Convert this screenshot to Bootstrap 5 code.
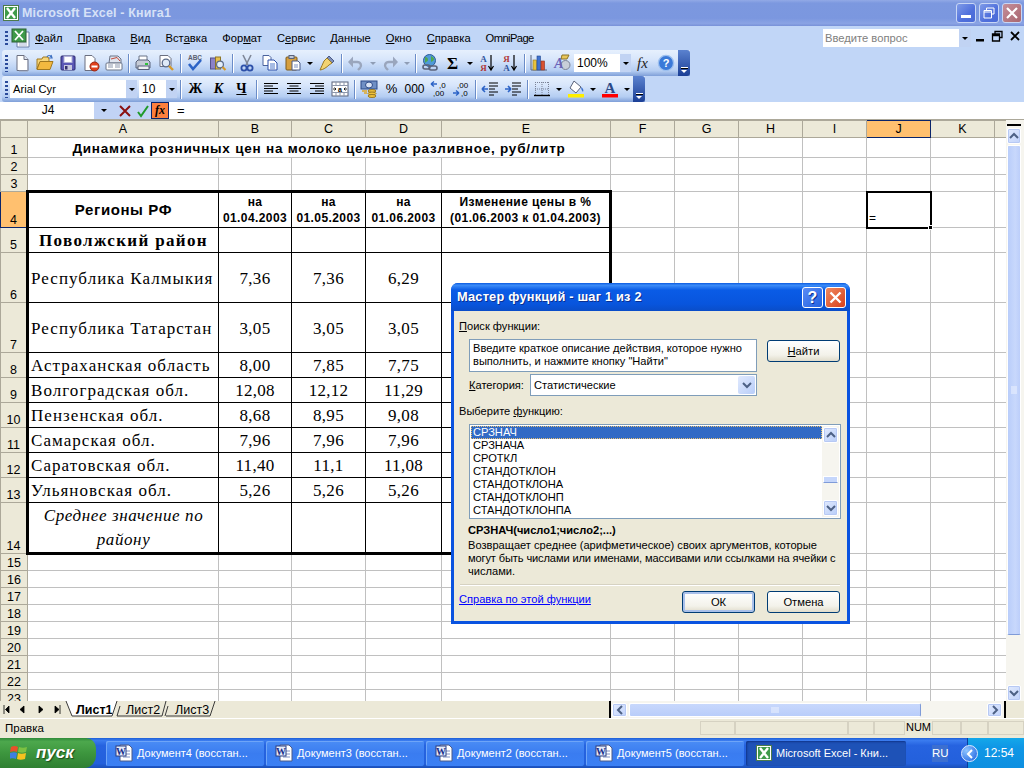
<!DOCTYPE html>
<html>
<head>
<meta charset="UTF-8">
<title>Microsoft Excel - Книга1</title>
<link rel="stylesheet" href="https://cdn.jsdelivr.net/npm/bootstrap@5.3.0/dist/css/bootstrap.min.css">
<style>
body { margin:0; width:1024px; height:768px; overflow:hidden; background:#ece9d8; font-family:"Liberation Sans",Arial,sans-serif; font-size:11.2px; color:#000; }
.app { width:1024px; height:768px; }
u { text-decoration-thickness:1px; text-underline-offset:1px; }
svg { display:block; }

/* title */
.titlebar { height:26px; background:linear-gradient(#92a9e6 0,#7c98df 12%,#7b97df 70%,#8aa3e4 90%,#7891d8 100%); padding:0 2px 0 3px; }
.titlebar .cap { color:#d6e1f7; font-weight:bold; font-size:12.5px; letter-spacing:.15px; margin-left:3px; }
.wbtn { width:20px; height:20px; border:1px solid #c8d6f5; border-radius:3px; background:linear-gradient(135deg,#7f9be8,#4f6fdc 60%,#4a6ad6); margin-left:3px; }
.wbtn.close { background:linear-gradient(135deg,#c58f9a,#a9666f); }

/* menu + toolbars */
.barzone { height:76px; background:#c1d6f7; }
.menu { height:24px; padding-left:35px; gap:15px; font-size:11.2px; }
.omni { letter-spacing:-.6px; }
.grip { width:3px; height:17px; margin:0 3px 0 4px; background:repeating-linear-gradient(#2b4b9b 0,#2b4b9b 2px,transparent 2px,transparent 4px); }
.toolbar { height:26px; background:linear-gradient(#e6f0fd 0,#d8e6fb 35%,#b4cdf2 80%,#7f9fd8 100%); border-radius:3px 0 0 3px; margin-left:2px; width:max-content; }
.tb1 { width:688px; }
.tb2 { width:643px; }
.ib { width:23px; height:22px; flex:none; }
.arr { width:11px; height:22px; flex:none; }
.arr::after { content:""; border:3px solid transparent; border-top:3px solid #000; border-bottom:0; border-left-width:3.5px; border-right-width:3.5px; }
.arr.off::after { border-top-color:#8f9db5; }
.sep { width:6px; height:19px; flex:none; position:relative; }
.sep::after { content:""; position:absolute; left:3px; top:0; bottom:0; width:1px; background:#6a8cc8; box-shadow:1px 0 0 #fff; }
.chev { width:12px; height:26px; margin-left:auto; background:linear-gradient(#5b82cf,#1b3f96); border-radius:0 3px 3px 0; padding-bottom:3px; }
.chev i { display:block; width:7px; height:1px; background:#fff; box-shadow:0 1px 0 #000; margin-top:auto; }
.chev b { display:block; border:3px solid transparent; border-top:3px solid #fff; border-bottom:0; margin-top:2px; }
.glyph { font-size:14px; font-family:"Liberation Serif",serif; font-weight:bold; line-height:1; }
.combo { background:#fff; height:18px; flex:none; padding-left:3px; font-size:12px; }
.combo .dd { width:11px; height:100%; margin-left:auto; background:#c1d3f3; }
.combo .dd::after { content:""; border:3px solid transparent; border-top:3px solid #000; border-bottom:0; border-left-width:3.5px; border-right-width:3.5px; }
.ask { position:absolute; left:823px; top:3px; width:148px; height:18px; color:#808080; padding-left:2px; font-size:11.2px; }
.mdi { position:absolute; top:4px; }

/* formula bar */
.fbar { height:18px; background:#fff; border-bottom:1px solid #aca899; }
.fbar .blue { width:57px; background:#c1d3f5; height:17px; }
.namebox { width:92px; margin-left:2px; text-align:center; font-size:12px; line-height:17px; }
.fx { width:18px; height:17px; background:#fd7f3d; border:1px solid #0a246a; font-family:"Liberation Serif",serif; font-style:italic; font-weight:bold; font-size:12px; line-height:15px; text-align:center; }

/* sheet */
.sheetwrap { height:581px; overflow:hidden; position:relative; }
.gridclip { width:1006px; height:581px; overflow:hidden; position:relative; background:#fff; }
table.sheet { table-layout:fixed; width:1006px; border-collapse:collapse; background:#fff; }
.sheet td,.sheet th { border:1px solid #c0c0c0; padding:0; text-align:center; overflow:visible; white-space:nowrap; font-weight:normal; vertical-align:middle; line-height:1.1; }
.sheet .hd { background:#ece9d8; border-color:#aca899; font-size:12.5px; line-height:1; }
.sheet tr.hrow th { height:17px; }
.sheet th.rn { vertical-align:bottom; padding-bottom:1px; }
.sheet .act { background:#ffc06f; border-color:#0a246a; }
.r17 td,.r17 th { height:17px; } .r20 td,.r20 th { height:20px; } .r36 td,.r36 th { height:36px; }
.r25 td,.r25 th { height:25px; } .r50 td,.r50 th { height:50px; } .r51 td,.r51 th { height:51px; }
.sheet td.b { border-color:#000; }
.sheet td.tt { border-top:3px solid #000; } .sheet td.tl { border-left:3px solid #000; } .sheet td.tr { border-right:3px solid #000; } .sheet td.tb { border-bottom:3px solid #000; }
.sheet td.ti { font-weight:bold; font-size:13.5px; letter-spacing:.77px; padding-top:3px; }
.sheet td.hdr { font-weight:bold; font-size:12px; line-height:16px; letter-spacing:.4px; }
.sheet td.reg { font-weight:bold; font-size:15px; letter-spacing:.6px; }
.sheet td.tm { font-family:"Liberation Serif",serif; font-size:17px; letter-spacing:.3px; padding-top:3px; }
.sheet td.tm.l { text-align:left; padding-left:2px; letter-spacing:1.05px; }
.sheet td.tm.pov { font-weight:bold; letter-spacing:1.35px; }
.sheet td.tm.avg { font-style:italic; line-height:24px; white-space:normal; letter-spacing:.6px; padding-top:1px; }
.cur { position:absolute; left:866px; top:71px; width:66px; height:38px; border:2px solid #000; font-size:12px; padding:0 0 0 1px; display:flex; align-items:flex-end; }
.cur::after { content:""; position:absolute; right:-3px; bottom:-3px; width:5px; height:5px; background:#000; border:1px solid #fff; }

/* scrollbars */
.vscroll { width:18px; background:#f6f5ef; position:relative; padding:8px 3px 0 1px; }
.vscroll .split { position:absolute; left:1px; right:3px; top:4px; height:2px; background:#000; }
.sbtn { background:linear-gradient(135deg,#e1eafe,#c1d3fb); border:1px solid #fff; border-radius:2px; flex:none; box-shadow:inset 0 0 0 1px #b7c9f4; }
.vthumb { background:linear-gradient(90deg,#b9cdfa,#c8d8fc 60%,#bccefa); border:1px solid #fff; border-bottom:1px solid #7f9bd8; border-radius:2px; height:490px; margin-top:1px; }
.hthumb { background:linear-gradient(#c8d8fc,#b9cdfa); border:1px solid #fff; border-right:1px solid #7f9bd8; border-radius:2px; width:292px; height:14px; margin-left:2px; }

/* tabs + status */
.tabs { height:17px; background:#ece9d8; position:relative; }
.hs { position:absolute; left:609px; top:0; width:397px; height:17px; background:#f6f5ef; border-left:2px solid #000; border-right:2px solid #000; padding-left:1px; }
.status { height:20px; border-top:1px solid #fff; padding:0 0 0 5px; font-size:11.5px; }
.status .p { height:14px; border:1px solid #d6d2c2; flex:none; font-size:11px; line-height:12px; text-align:center; }

/* taskbar */
.taskbar { height:30px; background:linear-gradient(#1d5fd6 0,#3a7bef 8%,#2663e0 25%,#2360dc 85%,#1a4fb8 100%); color:#fff; position:relative; }
.start { width:96px; height:30px; background:linear-gradient(#2f8a3a 0,#4da84d 12%,#3d963e 50%,#2f7f32 100%); border-radius:0 10px 12px 0; font-style:italic; font-weight:bold; font-size:17px; padding-left:10px; text-shadow:1px 1px 1px #1c4a1c; flex:none; }
.task { width:158px; height:25px; flex:none; background:linear-gradient(#4a8cf5,#3a7cf0 50%,#3b80f4); border-radius:2px; margin-right:2px; padding-left:9px; font-size:11px; box-shadow:inset 1px 1px 0 #6ea5f8; }
.task.on { background:#1e52b7; box-shadow:inset 1px 1px 2px #10348a; width:160px; padding-left:10px; }
.ru { position:absolute; left:932px; top:7px; width:16px; height:17px; background:#3c6fd0; text-align:center; line-height:17px; font-size:11.5px; }
.tray { position:absolute; left:967px; top:0; width:57px; height:30px; background:linear-gradient(#14a8ea,#0f97e6 30%,#0e8fe0); border-left:1px solid #0a3e9c; font-size:12px; padding-left:16px; line-height:30px; }
.chevr { position:absolute; left:-7px; top:7px; width:17px; height:17px; border-radius:50%; background:radial-gradient(circle at 30% 30%,#8fc5ff,#1a5fe0); border:1px solid #dfeaff; }

/* dialog */
.dlg { position:absolute; left:451px; top:283px; width:399px; height:341px; background:#0a53e0; border-radius:7px 7px 0 0; padding:0 3px 3px; }
.dlgtitle { height:28px; margin:0 -3px; padding:0 4px 0 6px; border-radius:7px 7px 0 0; background:linear-gradient(#0a5ae0 0,#3c8cf8 8%,#0a5ce6 25%,#0855dd 75%,#0a4dc8 100%); color:#fff; font-weight:bold; font-size:12.8px; text-shadow:1px 1px 0 #0a2f90; letter-spacing:.2px; }
.dbtn { width:21px; height:21px; border:1px solid #fff; border-radius:3px; background:linear-gradient(135deg,#5a8cf5,#2260e0); margin-left:2px; color:#fff; font-weight:bold; font-size:16px; line-height:19px; text-align:center; }
.dbtn.x { background:linear-gradient(135deg,#f08a60,#d8401c); }
.dlgbody { background:#ece9d8; height:310px; padding:9px 4px 0 5px; font-size:11.1px; position:relative; }
.lh13 { line-height:13px; }
.desc { white-space:nowrap; }
.desc span { letter-spacing:-.13px; }
.hint { margin-left:10px; width:288px; height:33px; background:#fff; border:1px solid #7f9db9; padding:2px 3px; line-height:13px; white-space:nowrap; }
.xpbtn { width:73px; height:22px; padding:0; font-size:11.2px; line-height:20px; border:1px solid #003c74; border-radius:3px; background:linear-gradient(#fff,#f3f2ea 70%,#e0dccb); color:#000; }
.xpbtn.def { box-shadow:inset 0 0 0 2px #a9c0ea; }
.catsel { width:227px; height:22px; background:#fff; border:1px solid #7f9db9; padding-left:3px; }
.catsel .dd { width:17px; height:18px; margin:1px; background:linear-gradient(135deg,#e1eafe,#b8cdf8); border-radius:2px; }
.fnlist { margin-left:10px; width:372px; height:95px; border:1px solid #7f9db9; background:#fff; padding:1px; border-radius:0; }
.fnlist .list-group-item { border:0; padding:0 0 0 2px; height:13px; line-height:13px; background:transparent; color:#000; font-size:11.1px; }
.fnlist .list-group-item.active { background:#316ac5; color:#fff; outline:1px dotted #e8c070; outline-offset:-1px; }
.fnscroll { width:17px; background:#f6f5ef; }
.fnbtn { width:15px; height:16px; margin:1px; background:linear-gradient(135deg,#e1eafe,#b8cdf8); border:1px solid #fff; border-radius:2px; box-shadow:0 0 0 1px #b7c9f4 inset; }
.fnthumb { width:15px; height:7px; margin:auto 1px 16px; background:#c5d6fb; border:1px solid #fff; border-bottom-color:#7f9bd8; }
.hr { height:1px; background:#d6d2c2; box-shadow:0 1px 0 #fff; margin:6px 3px 0 1px; }
.dlink { color:#00f; text-decoration:underline; }
</style>
</head>
<body>
<svg width="0" height="0" class="position-absolute">
  <symbol id="xl" viewBox="0 0 16 16"><rect x=".5" y=".5" width="15" height="15" fill="#fff" stroke="#4c7a4c"/><rect x="2" y="2" width="12" height="12" fill="#3f9a4a"/><path d="M4 3l8 10M12 3L4 13" stroke="#fff" stroke-width="2.4"/></symbol>
  <symbol id="word" viewBox="0 0 18 18"><path d="M5 1h9l3 3v13H5z" fill="#fff" stroke="#4a5a88"/><path d="M8 7h7M8 10h7M8 13h7" stroke="#7d90c4"/><rect x="1" y="2" width="10" height="10" fill="#e7eefc" stroke="#2c3f80"/></symbol>
  <symbol id="new" viewBox="0 0 18 18"><path d="M4 1.5h7l4 4v11H4z" fill="#fff" stroke="#6b6f80"/><path d="M11 1.5v4h4" fill="#dfe6f5" stroke="#6b6f80"/><path d="M15 6v11H6" stroke="#9aa3b8" fill="none"/></symbol>
  <symbol id="open" viewBox="0 0 18 18"><path d="M1 5h5l1-2h5l1 2v3H4L1 15z" fill="#f7d679" stroke="#a07820"/><path d="M1 15.5l3-8h13l-3 8z" fill="#f3b93f" stroke="#a07820"/><path d="M11 3c1-2 3-2 4 0M15 1l1 3-3 0" stroke="#3c6fc0" fill="none" stroke-width="1.2"/></symbol>
  <symbol id="save" viewBox="0 0 18 18"><rect x="2" y="2" width="14" height="14" rx="1" fill="#5b57b5" stroke="#2d2b70"/><rect x="5" y="2.5" width="8" height="6" fill="#fff" stroke="#b0b0d8"/><rect x="5" y="11" width="8" height="5" fill="#c8c8de"/><rect x="6" y="12" width="2.5" height="3.5" fill="#34306e"/></symbol>
  <symbol id="perm" viewBox="0 0 18 18"><path d="M3 1.5h7l3 3v12H3z" fill="#fff" stroke="#6b6f80"/><circle cx="12.5" cy="12.5" r="4.5" fill="#e0401c" stroke="#9a2410"/><rect x="9.5" y="11.5" width="6" height="2" fill="#fff"/></symbol>
  <symbol id="mail" viewBox="0 0 18 18"><path d="M5 2h8l3 3v4H4z" fill="#dfe4ee" stroke="#6b7488"/><path d="M6 5l6-1.5L15 7" stroke="#c24b3a" fill="none"/><rect x="1" y="9" width="16" height="7" rx="1" fill="#fff" stroke="#6b7488"/><path d="M3 11h5M3 13h5M10 11h5M10 13h5" stroke="#8d97ac"/></symbol>
  <symbol id="print" viewBox="0 0 18 18"><path d="M5 2h8v5H5z" fill="#fff" stroke="#6b7488"/><path d="M2 8l2-2h10l2 2v6H2z" fill="#c5cbd6" stroke="#59627a"/><rect x="4" y="12" width="11" height="3.5" fill="#eef0f4" stroke="#59627a"/><rect x="11" y="9" width="3" height="2" fill="#2fc23a"/></symbol>
  <symbol id="prev" viewBox="0 0 18 18"><path d="M3 1.5h8l3 3v8H3v-11z" fill="#fff" stroke="#6b6f80"/><circle cx="9" cy="9" r="3.8" fill="#dfeaf7" stroke="#5b6b8a" stroke-width="1.3"/><path d="M12 12l4 4" stroke="#d69a2a" stroke-width="2.4"/></symbol>
  <symbol id="research" viewBox="0 0 18 18"><rect x="1.5" y="4" width="5" height="11" fill="#8b82c8" stroke="#54508c"/><rect x="6.5" y="3" width="5" height="12" fill="#e6c04f" stroke="#8d7526"/><circle cx="11" cy="10.5" r="3.4" fill="#e3eefb" stroke="#5b6b8a" stroke-width="1.2"/><path d="M13.5 13l3 3" stroke="#d69a2a" stroke-width="2.2"/></symbol>
  <symbol id="cut" viewBox="0 0 18 18"><path d="M5 1l5 10M13 1L8 11" stroke="#7f8798" stroke-width="1.6"/><circle cx="6" cy="14" r="2.6" fill="none" stroke="#2c4fa8" stroke-width="1.8"/><circle cx="12" cy="14" r="2.6" fill="none" stroke="#2c4fa8" stroke-width="1.8"/></symbol>
  <symbol id="copy" viewBox="0 0 18 18"><path d="M2 1.5h6l2 2v8H2z" fill="#fff" stroke="#4a629c"/><path d="M7 6h6l3 3v7H7z" fill="#fff" stroke="#2c4fa8"/><path d="M9 10h5M9 12h5M9 14h5" stroke="#4f79c8"/></symbol>
  <symbol id="paste" viewBox="0 0 18 18"><rect x="2" y="3" width="11" height="13" rx="1" fill="#d69f3f" stroke="#7c5a1c"/><rect x="5" y="1.5" width="5" height="3" fill="#bfc6d4" stroke="#59627a"/><path d="M8 7h6l2 2v7H8z" fill="#fff" stroke="#4a5a88"/><path d="M10 11h4M10 13h4" stroke="#7d90c4"/></symbol>
  <symbol id="brush" viewBox="0 0 18 18"><path d="M11 2l5 5-2 2-5-5z" fill="#7f8fb8" stroke="#4a5a88"/><path d="M9 4l5 5-3 2c-2 2-6 5-9 5 1-3 3-6 4-9z" fill="#f2d372" stroke="#9a7a24"/></symbol>
  <symbol id="undo" viewBox="0 0 18 18"><path d="M3 8h7c4 0 5 4 3 6l-2 2" fill="none" stroke="#9aa6bd" stroke-width="2.4"/><path d="M6 2.500v11L1 8z" fill="#9aa6bd"/></symbol>
  <symbol id="redo" viewBox="0 0 18 18"><path d="M15 8H8c-4 0-5 4-3 6l2 2" fill="none" stroke="#9aa6bd" stroke-width="2.4"/><path d="M12 2.500v11L17 8z" fill="#9aa6bd"/></symbol>
  <symbol id="link" viewBox="0 0 18 18"><circle cx="8.5" cy="6.5" r="6" fill="#4f9ad8" stroke="#2c5a98"/><path d="M4 3c2 0 3 1 3 3s-3 1-3 4M10 1c0 2 3 2 3 4s-2 2-3 3" fill="#4fa84f"/><rect x="2" y="11" width="7" height="4" rx="2" fill="none" stroke="#59627a" stroke-width="1.6"/><rect x="8" y="12" width="8" height="4" rx="2" fill="none" stroke="#59627a" stroke-width="1.6"/></symbol>
  <symbol id="chart" viewBox="0 0 18 18"><path d="M1 1v15h16" stroke="#59627a" fill="none"/><rect x="3" y="6" width="3.5" height="10" fill="#e8c23a" stroke="#8d7526" stroke-width=".6"/><rect x="7" y="2" width="3.5" height="14" fill="#3f72cf" stroke="#24488c" stroke-width=".6"/><rect x="11" y="7" width="3.5" height="9" fill="#d8502f" stroke="#8c3020" stroke-width=".6"/></symbol>
  <symbol id="draw" viewBox="0 0 18 18"><circle cx="12.5" cy="11" r="4.5" fill="#c8ced8" stroke="#7a8296"/><path d="M9 1h7l-2 4H8z" fill="#e8c65a" stroke="#8d7526"/></symbol>
  <symbol id="al" viewBox="0 0 16 14"><path d="M1 1.5h14M1 4h9M1 6.500h14M1 9h9M1 11.500h14" stroke="#000"/></symbol>
  <symbol id="ac" viewBox="0 0 16 14"><path d="M1 1.500h14M3.500 4h9M1 6.500h14M3.500 9h9M1 11.500h14" stroke="#000"/></symbol>
  <symbol id="ar" viewBox="0 0 16 14"><path d="M1 1.500h14M6 4h9M1 6.500h14M6 9h9M1 11.500h14" stroke="#000"/></symbol>
  <symbol id="merge" viewBox="0 0 18 16"><rect x="1" y="1" width="16" height="14" fill="#fff" stroke="#59627a"/><path d="M1 4.500h16M1 11.500h16M5 1v3M9 1v3M13 1v3M5 12v3M9 12v3M13 12v3" stroke="#8d97ac"/><path d="M2 8h3M3.500 6.500L5 8 3.500 9.500M16 8h-3M14.500 6.500L13 8l1.500 1.500" stroke="#000" fill="none" stroke-width=".8"/></symbol>
  <symbol id="cur" viewBox="0 0 18 18"><rect x="1" y="1" width="16" height="8" fill="#6f8fc4" stroke="#2c4a88"/><ellipse cx="9" cy="5" rx="3.500" ry="3" fill="#d8e2f4" stroke="#2c4a88"/><ellipse cx="12" cy="11" rx="4" ry="1.500" fill="#f0c23a" stroke="#9a7a24"/><ellipse cx="12" cy="13.500" rx="4" ry="1.500" fill="#f0c23a" stroke="#9a7a24"/><ellipse cx="12" cy="16" rx="4" ry="1.500" fill="#f0c23a" stroke="#9a7a24"/><path d="M2 11h5M4 13h3" stroke="#e0a82a" stroke-width="1.400"/></symbol>
  <symbol id="out" viewBox="0 0 18 16"><path d="M8 2h9M8 5h9M8 8h6M8 11h9M8 14h5" stroke="#000"/><path d="M1 8h6M1 8l3-3M1 8l3 3" stroke="#2c63c6" stroke-width="1.600" fill="none"/></symbol>
  <symbol id="ind" viewBox="0 0 18 16"><path d="M8 2h9M8 5h9M8 8h6M8 11h9M8 14h5" stroke="#000"/><path d="M7 8H1M7 8L4 5M7 8l-3 3" stroke="#2c63c6" stroke-width="1.600" fill="none"/></symbol>
  <symbol id="bord" viewBox="0 0 18 18"><path d="M2 2.500h14M2 9h14M2.500 2v13M9 2v13M15.500 2v13" stroke="#7a8296" stroke-dasharray="1 1"/><path d="M1 15.500h16" stroke="#000" stroke-width="1.400"/></symbol>
  <symbol id="fill" viewBox="0 0 18 18"><path d="M7 1l7 6-5 6-6-5z" fill="#fff" stroke="#59627a"/><path d="M14 7c2 1 3 3 2 5-1-1-2-3-2-5z" fill="#3f72cf"/><rect x="1" y="14" width="16" height="3.500" fill="#ffef00"/></symbol>
  <symbol id="winlogo" viewBox="0 0 18 18"><path d="M1 3c3-1.500 5-1 7 0L7 8C5 7 3 7 0 8z" fill="#e8502a"/><path d="M9 3c3 1 5 1 8 0l-1 5c-3 1-5 1-8 0z" fill="#7cc142"/><path d="M0 9c3-1 5-1 7 0l-1 6c-2-1-4-1-7 0z" fill="#3f7fe0"/><path d="M8 9c2 1 5 1 8 0l-1 6c-3 1-6 1-8 0z" fill="#f6c21e"/></symbol>
</svg>

<div class="app d-flex flex-column position-relative">
  <!-- title bar -->
  <div class="titlebar d-flex align-items-center">
    <svg width="16" height="16"><use href="#xl"/></svg>
    <span class="cap">Microsoft Excel - Книга1</span>
    <div class="ms-auto d-flex">
      <div class="wbtn d-flex align-items-end justify-content-center pb-1"><svg width="10" height="3"><rect width="10" height="3" fill="#fff"/></svg></div>
      <div class="wbtn d-flex align-items-center justify-content-center"><svg width="12" height="12"><path d="M3.500 3V1h7.500v6H8.500M1 3.500h7.500v7.500H1zM1 5h7.500" fill="none" stroke="#fff"/></svg></div>
      <div class="wbtn close d-flex align-items-center justify-content-center"><svg width="12" height="12"><path d="M1 1l10 10M11 1L1 11" stroke="#fff" stroke-width="2.200"/></svg></div>
    </div>
  </div>

  <!-- menu and toolbars -->
  <div class="barzone position-relative">
    <div class="menu d-flex align-items-center position-relative">
      <div class="position-absolute d-flex align-items-center" style="left:1px;top:2px"><div class="grip" style="height:14px"></div><svg width="20" height="20"><path d="M6 4h12v15H6z" fill="#fff" stroke="#6b7ea8"/><path d="M8 15h8M8 17h8" stroke="#a8b6d4"/><rect x="1" y="1" width="14" height="13" fill="#3f9a4a" stroke="#2c5f33"/><path d="M4 3l8 9M12 3l-8 9" stroke="#fff" stroke-width="1.800"/></svg></div>
      <span><u>Ф</u>айл</span><span><u>П</u>равка</span><span><u>В</u>ид</span><span>Вст<u>а</u>вка</span><span>Фор<u>м</u>ат</span><span>С<u>е</u>рвис</span><span><u>Д</u>анные</span><span><u>О</u>кно</span><span><u>С</u>правка</span><span class="omni">OmniPage</span>
    </div>
    <div class="ask d-flex align-items-center bg-white">Введите вопрос<div class="ms-auto h-100 d-flex align-items-center justify-content-center" style="width:12px;background:#c1d3f3"><div class="arr d-flex align-items-center justify-content-center" style="width:8px"></div></div></div>
    <svg class="mdi" width="53" height="14" style="left:971px"><rect x="5" y="9" width="8" height="2.500" fill="#000"/><path d="M24 4V1.500h7v6h-2.500M21.500 4h7v7h-7zM21.500 5.500h7" fill="none" stroke="#000" stroke-width="1.300"/><path d="M40 2l8 8M48 2l-8 8" stroke="#000" stroke-width="1.800"/></svg>

    <div class="toolbar tb1 d-flex align-items-center">
      <div class="grip" style="margin:0 2px 0 3px"></div>
      <div class="ib d-flex align-items-center justify-content-center"><svg width="18" height="18"><use href="#new"/></svg></div>
      <div class="ib d-flex align-items-center justify-content-center"><svg width="18" height="18"><use href="#open"/></svg></div>
      <div class="ib d-flex align-items-center justify-content-center"><svg width="18" height="18"><use href="#save"/></svg></div>
      <div class="ib d-flex align-items-center justify-content-center"><svg width="18" height="18"><use href="#perm"/></svg></div>
      <div class="ib d-flex align-items-center justify-content-center"><svg width="18" height="18"><use href="#mail"/></svg></div>
      <div class="sep"></div>
      <div class="ib d-flex align-items-center justify-content-center"><svg width="18" height="18"><use href="#print"/></svg></div>
      <div class="ib d-flex align-items-center justify-content-center"><svg width="18" height="18"><use href="#prev"/></svg></div>
      <div class="sep"></div>
      <div class="ib d-flex align-items-center justify-content-center"><svg width="18" height="18"><text x="9" y="6" font-family="Liberation Sans" font-size="6.500" font-weight="bold" text-anchor="middle" fill="#5a5f70">ABC</text><path d="M3 10l4 5 8-9" stroke="#2c63c6" stroke-width="2.600" fill="none"/></svg></div>
      <div class="ib d-flex align-items-center justify-content-center"><svg width="18" height="18"><use href="#research"/></svg></div>
      <div class="sep"></div>
      <div class="ib d-flex align-items-center justify-content-center"><svg width="18" height="18"><use href="#cut"/></svg></div>
      <div class="ib d-flex align-items-center justify-content-center"><svg width="18" height="18"><use href="#copy"/></svg></div>
      <div class="ib d-flex align-items-center justify-content-center"><svg width="18" height="18"><use href="#paste"/></svg></div>
      <div class="arr d-flex align-items-center justify-content-center"></div>
      <div class="ib d-flex align-items-center justify-content-center"><svg width="18" height="18"><use href="#brush"/></svg></div>
      <div class="sep"></div>
      <div class="ib d-flex align-items-center justify-content-center"><svg width="18" height="18"><use href="#undo"/></svg></div>
      <div class="arr off d-flex align-items-center justify-content-center"></div>
      <div class="ib d-flex align-items-center justify-content-center"><svg width="18" height="18"><use href="#redo"/></svg></div>
      <div class="arr off d-flex align-items-center justify-content-center"></div>
      <div class="sep"></div>
      <div class="ib d-flex align-items-center justify-content-center"><svg width="18" height="18"><use href="#link"/></svg></div>
      <div class="ib glyph d-flex align-items-center justify-content-center" style="font-size:17px">Σ</div>
      <div class="arr d-flex align-items-center justify-content-center"></div>
      <div class="ib d-flex align-items-center justify-content-center"><svg width="18" height="18"><text x="5.500" y="8" font-family="Liberation Serif" font-size="9" font-weight="bold" text-anchor="middle" fill="#31559e">А</text><text x="5.500" y="17" font-family="Liberation Serif" font-size="9" font-weight="bold" text-anchor="middle" fill="#b03a3a">Я</text><path d="M13 1v14M10.500 12l2.500 4 2.500-4" stroke="#000" fill="none" stroke-width="1.200"/></svg></div>
      <div class="ib d-flex align-items-center justify-content-center"><svg width="18" height="18"><text x="5.500" y="8" font-family="Liberation Serif" font-size="9" font-weight="bold" text-anchor="middle" fill="#b03a3a">Я</text><text x="5.500" y="17" font-family="Liberation Serif" font-size="9" font-weight="bold" text-anchor="middle" fill="#31559e">А</text><path d="M13 1v14M10.500 12l2.500 4 2.500-4" stroke="#000" fill="none" stroke-width="1.200"/></svg></div>
      <div class="sep"></div>
      <div class="ib d-flex align-items-center justify-content-center"><svg width="18" height="18"><use href="#chart"/></svg></div>
      <div class="ib d-flex align-items-center justify-content-center"><svg width="18" height="18"><use href="#draw"/><text x="6" y="14" font-family="Liberation Serif" font-style="italic" font-weight="bold" font-size="14" text-anchor="middle" fill="#6b63b8">A</text></svg></div>
      <div class="combo d-flex align-items-center" style="width:57px;margin-left:1px">100%<div class="dd d-flex align-items-center justify-content-center"></div></div>
      <div class="ib d-flex align-items-center justify-content-center" style="font-family:'Liberation Serif',serif;font-style:italic;font-size:15px;color:#222">fx</div>
      <div class="ib d-flex align-items-center justify-content-center"><svg width="18" height="18"><circle cx="9" cy="9" r="7.600" fill="#3a79d8" stroke="#9dc0ef" stroke-width="1.400"/><text x="9" y="13" font-family="Liberation Sans" font-weight="bold" font-size="11" text-anchor="middle" fill="#fff">?</text></svg></div>
      <div class="chev d-flex flex-column align-items-center"><i></i><b></b></div>
    </div>

    <div class="toolbar tb2 d-flex align-items-center">
      <div class="grip" style="margin:0 2px 0 3px"></div>
      <div class="combo d-flex align-items-center" style="width:127px;font-size:11.2px">Arial Cyr<div class="dd d-flex align-items-center justify-content-center"></div></div>
      <div class="combo d-flex align-items-center" style="width:38px;margin-left:2px">10<div class="dd d-flex align-items-center justify-content-center"></div></div>
      <div class="sep" style="width:7px"></div>
      <div class="ib glyph d-flex align-items-center justify-content-center">Ж</div>
      <div class="ib glyph d-flex align-items-center justify-content-center fst-italic">К</div>
      <div class="ib glyph d-flex align-items-center justify-content-center text-decoration-underline">Ч</div>
      <div class="sep"></div>
      <div class="ib d-flex align-items-center justify-content-center"><svg width="16" height="14"><use href="#al"/></svg></div>
      <div class="ib d-flex align-items-center justify-content-center"><svg width="16" height="14"><use href="#ac"/></svg></div>
      <div class="ib d-flex align-items-center justify-content-center"><svg width="16" height="14"><use href="#ar"/></svg></div>
      <div class="ib d-flex align-items-center justify-content-center"><svg width="18" height="16"><use href="#merge"/><text x="9" y="10.800" font-family="Liberation Sans" font-weight="bold" font-size="7" text-anchor="middle">a</text></svg></div>
      <div class="sep"></div>
      <div class="ib d-flex align-items-center justify-content-center"><svg width="18" height="18"><use href="#cur"/></svg></div>
      <div class="ib d-flex align-items-center justify-content-center" style="font-size:13px">%</div>
      <div class="ib d-flex align-items-center justify-content-center" style="font-size:12px">000</div>
      <div class="ib d-flex align-items-center justify-content-center"><svg width="18" height="18"><path d="M2 4h6M2 4l3-2.500M2 4l3 2.500" stroke="#2c63c6" stroke-width="1.400" fill="none"/><text x="10" y="7.500" font-family="Liberation Sans" font-size="8">,0</text><text x="4" y="16" font-family="Liberation Sans" font-size="8">,00</text></svg></div>
      <div class="ib d-flex align-items-center justify-content-center"><svg width="18" height="18"><text x="5" y="7.500" font-family="Liberation Sans" font-size="8">,00</text><path d="M1 13h6M7 13l-3-2.500M7 13l-3 2.500" stroke="#2c63c6" stroke-width="1.400" fill="none"/><text x="9" y="16" font-family="Liberation Sans" font-size="8">,0</text></svg></div>
      <div class="sep"></div>
      <div class="ib d-flex align-items-center justify-content-center"><svg width="18" height="16"><use href="#out"/></svg></div>
      <div class="ib d-flex align-items-center justify-content-center"><svg width="18" height="16"><use href="#ind"/></svg></div>
      <div class="sep"></div>
      <div class="ib d-flex align-items-center justify-content-center"><svg width="18" height="18"><use href="#bord"/></svg></div>
      <div class="arr d-flex align-items-center justify-content-center"></div>
      <div class="ib d-flex align-items-center justify-content-center"><svg width="18" height="18"><use href="#fill"/></svg></div>
      <div class="arr d-flex align-items-center justify-content-center"></div>
      <div class="ib d-flex align-items-center justify-content-center"><svg width="18" height="18"><text x="9" y="12.500" font-family="Liberation Serif" font-weight="bold" font-size="15" text-anchor="middle" fill="#2c4a88">A</text><rect x="1" y="14" width="16" height="3.500" fill="#f00"/></svg></div>
      <div class="arr d-flex align-items-center justify-content-center"></div>
      <div class="chev d-flex flex-column align-items-center"><i></i><b></b></div>
    </div>
  </div>

  <!-- formula bar -->
  <div class="fbar d-flex">
    <div class="namebox">J4</div>
    <div class="blue d-flex align-items-center">
      <div class="arr d-flex align-items-center justify-content-center" style="width:20px"></div>
      <svg width="14" height="14" class="ms-1"><path d="M2 2l10 10M12 2L2 12" stroke="#8a1010" stroke-width="2"/></svg>
      <svg width="14" height="14" class="ms-1"><path d="M2 8l3 4 7-10" stroke="#1f9a2a" stroke-width="2" fill="none"/></svg>
    </div>
    <div class="fx">fx</div>
    <div class="ms-2" style="font-size:13px;line-height:17px">=</div>
  </div>

  <!-- sheet -->
  <div class="sheetwrap d-flex">
    <div class="gridclip">
      <table class="sheet">
        <colgroup><col style="width:27px"><col style="width:191px"><col style="width:73px"><col style="width:74px"><col style="width:76px"><col style="width:169px"><col style="width:64px"><col style="width:64px"><col style="width:64px"><col style="width:64px"><col style="width:64px"><col style="width:64px"><col style="width:12px"></colgroup>
        <tr class="hrow"><th class="hd"></th><th class="hd">A</th><th class="hd">B</th><th class="hd">C</th><th class="hd">D</th><th class="hd">E</th><th class="hd">F</th><th class="hd">G</th><th class="hd">H</th><th class="hd">I</th><th class="hd act">J</th><th class="hd">K</th><th class="hd"></th></tr>
        <tr class="r20"><th class="hd rn">1</th><td colspan="5" class="ti">Динамика розничных цен на молоко цельное разливное, руб/литр</td><td></td><td></td><td></td><td></td><td></td><td></td><td></td></tr>
        <tr class="r17"><th class="hd rn">2</th><td></td><td></td><td></td><td></td><td></td><td></td><td></td><td></td><td></td><td></td><td></td><td></td></tr>
        <tr class="r17"><th class="hd rn">3</th><td></td><td></td><td></td><td></td><td></td><td></td><td></td><td></td><td></td><td></td><td></td><td></td></tr>
        <tr class="r36"><th class="hd rn act">4</th><td class="b tt tl reg">Регионы РФ</td><td class="b tt hdr">на<br>01.04.2003</td><td class="b tt hdr">на<br>01.05.2003</td><td class="b tt hdr">на<br>01.06.2003</td><td class="b tt tr hdr">Изменение цены в %<br>(01.06.2003 к 01.04.2003)</td><td></td><td></td><td></td><td></td><td></td><td></td><td></td></tr>
        <tr class="r25"><th class="hd rn">5</th><td class="b tl tm pov">Поволжский район</td><td class="b"></td><td class="b"></td><td class="b"></td><td class="b tr"></td><td></td><td></td><td></td><td></td><td></td><td></td><td></td></tr>
        <tr class="r50"><th class="hd rn">6</th><td class="b tl tm l">Республика Калмыкия</td><td class="b tm">7,36</td><td class="b tm">7,36</td><td class="b tm">6,29</td><td class="b tr"></td><td></td><td></td><td></td><td></td><td></td><td></td><td></td></tr>
        <tr class="r50"><th class="hd rn">7</th><td class="b tl tm l">Республика Татарстан</td><td class="b tm">3,05</td><td class="b tm">3,05</td><td class="b tm">3,05</td><td class="b tr"></td><td></td><td></td><td></td><td></td><td></td><td></td><td></td></tr>
        <tr class="r25"><th class="hd rn">8</th><td class="b tl tm l">Астраханская область</td><td class="b tm">8,00</td><td class="b tm">7,85</td><td class="b tm">7,75</td><td class="b tr"></td><td></td><td></td><td></td><td></td><td></td><td></td><td></td></tr>
        <tr class="r25"><th class="hd rn">9</th><td class="b tl tm l">Волгоградская обл.</td><td class="b tm">12,08</td><td class="b tm">12,12</td><td class="b tm">11,29</td><td class="b tr"></td><td></td><td></td><td></td><td></td><td></td><td></td><td></td></tr>
        <tr class="r25"><th class="hd rn">10</th><td class="b tl tm l">Пензенская обл.</td><td class="b tm">8,68</td><td class="b tm">8,95</td><td class="b tm">9,08</td><td class="b tr"></td><td></td><td></td><td></td><td></td><td></td><td></td><td></td></tr>
        <tr class="r25"><th class="hd rn">11</th><td class="b tl tm l">Самарская обл.</td><td class="b tm">7,96</td><td class="b tm">7,96</td><td class="b tm">7,96</td><td class="b tr"></td><td></td><td></td><td></td><td></td><td></td><td></td><td></td></tr>
        <tr class="r25"><th class="hd rn">12</th><td class="b tl tm l">Саратовская обл.</td><td class="b tm">11,40</td><td class="b tm">11,1</td><td class="b tm">11,08</td><td class="b tr"></td><td></td><td></td><td></td><td></td><td></td><td></td><td></td></tr>
        <tr class="r25"><th class="hd rn">13</th><td class="b tl tm l">Ульяновская обл.</td><td class="b tm">5,26</td><td class="b tm">5,26</td><td class="b tm">5,26</td><td class="b tr"></td><td></td><td></td><td></td><td></td><td></td><td></td><td></td></tr>
        <tr class="r51"><th class="hd rn">14</th><td class="b tl tb tm avg">Среднее значение по району</td><td class="b tb"></td><td class="b tb"></td><td class="b tb"></td><td class="b tr tb"></td><td></td><td></td><td></td><td></td><td></td><td></td><td></td></tr>
        <tr class="r17"><th class="hd rn">15</th><td></td><td></td><td></td><td></td><td></td><td></td><td></td><td></td><td></td><td></td><td></td><td></td></tr>
        <tr class="r17"><th class="hd rn">16</th><td></td><td></td><td></td><td></td><td></td><td></td><td></td><td></td><td></td><td></td><td></td><td></td></tr>
        <tr class="r17"><th class="hd rn">17</th><td></td><td></td><td></td><td></td><td></td><td></td><td></td><td></td><td></td><td></td><td></td><td></td></tr>
        <tr class="r17"><th class="hd rn">18</th><td></td><td></td><td></td><td></td><td></td><td></td><td></td><td></td><td></td><td></td><td></td><td></td></tr>
        <tr class="r17"><th class="hd rn">19</th><td></td><td></td><td></td><td></td><td></td><td></td><td></td><td></td><td></td><td></td><td></td><td></td></tr>
        <tr class="r17"><th class="hd rn">20</th><td></td><td></td><td></td><td></td><td></td><td></td><td></td><td></td><td></td><td></td><td></td><td></td></tr>
        <tr class="r17"><th class="hd rn">21</th><td></td><td></td><td></td><td></td><td></td><td></td><td></td><td></td><td></td><td></td><td></td><td></td></tr>
        <tr class="r17"><th class="hd rn">22</th><td></td><td></td><td></td><td></td><td></td><td></td><td></td><td></td><td></td><td></td><td></td><td></td></tr>
        <tr class="r17"><th class="hd rn">23</th><td></td><td></td><td></td><td></td><td></td><td></td><td></td><td></td><td></td><td></td><td></td><td></td></tr>
      </table>
      <div class="cur">=</div>
    </div>
    <div class="vscroll d-flex flex-column">
      <div class="split"></div>
      <div class="sbtn d-flex align-items-center justify-content-center" style="height:16px"><svg width="10" height="8"><path d="M1 6l4-4 4 4" stroke="#4d6185" stroke-width="2" fill="none"/></svg></div>
      <div class="vthumb d-flex align-items-center justify-content-center"><svg width="8" height="8"><path d="M1 1h6M1 3h6M1 5h6M1 7h6" stroke="#eef3ff"/></svg></div>
      <div class="sbtn mt-auto d-flex align-items-center justify-content-center" style="height:16px"><svg width="10" height="8"><path d="M1 2l4 4 4-4" stroke="#4d6185" stroke-width="2" fill="none"/></svg></div>
    </div>
  </div>

  <!-- sheet tabs + horizontal scroll -->
  <div class="tabs">
    <svg width="232" height="17">
      <path d="M4 4v9M5.500 8.500L9 5v7zM24 5v7l-4-3.500zM39 5v7l4-3.500zM55 5v7l4-3.500zM60 4v9" fill="#000" stroke="#000" stroke-width=".8"/>
      <path d="M66 0l6 15h40l5-15z" fill="#fff"/>
      <path d="M66 0l6 15h40l5-15M117 15h45l4-15M120 5l-3 10M166 15h44l5-15M168 5l-3 10" fill="none" stroke="#3a3a3a"/>
      <text x="76" y="12.500" font-family="Liberation Sans" font-weight="bold" font-size="12.500">Лист1</text>
      <text x="126" y="12.500" font-family="Liberation Sans" font-size="12.500">Лист2</text>
      <text x="175" y="12.500" font-family="Liberation Sans" font-size="12.500">Лист3</text>
    </svg>
    <div class="hs d-flex align-items-center">
      <div class="sbtn d-flex align-items-center justify-content-center" style="width:15px;height:14px"><svg width="8" height="10"><path d="M6 1L2 5l4 4" stroke="#4d6185" stroke-width="2" fill="none"/></svg></div>
      <div class="hthumb d-flex align-items-center justify-content-center"><svg width="8" height="8"><path d="M1 1v6M3 1v6M5 1v6M7 1v6" stroke="#eef3ff"/></svg></div>
      <div class="sbtn d-flex align-items-center justify-content-center" style="width:15px;height:14px;margin-left:66px"><svg width="8" height="10"><path d="M2 1l4 4-4 4" stroke="#4d6185" stroke-width="2" fill="none"/></svg></div>
    </div>
  </div>

  <!-- status -->
  <div class="status d-flex align-items-center">
    <span>Правка</span>
    <div class="ms-auto d-flex">
      <div class="p" style="width:35px"></div><div class="p" style="width:113px"></div><div class="p" style="width:26px"></div><div class="p" style="width:31px"></div><div class="p border-0" style="width:27px;height:15px">NUM</div><div class="p" style="width:29px"></div><div class="p" style="width:27px"></div><div class="p" style="width:36px"></div>
    </div>
  </div>

  <!-- taskbar -->
  <div class="taskbar d-flex align-items-center">
    <div class="start d-flex align-items-center gap-2"><svg width="18" height="18"><use href="#winlogo"/></svg>пуск</div>
    <div style="width:10px"></div>
    <div class="task d-flex align-items-center gap-1"><svg width="18" height="18"><use href="#word"/><text x="6" y="10.500" font-family="Liberation Serif" font-weight="bold" font-size="10" text-anchor="middle" fill="#1b2f88">W</text></svg>Документ4 (восстан...</div>
    <div class="task d-flex align-items-center gap-1"><svg width="18" height="18"><use href="#word"/><text x="6" y="10.500" font-family="Liberation Serif" font-weight="bold" font-size="10" text-anchor="middle" fill="#1b2f88">W</text></svg>Документ3 (восстан...</div>
    <div class="task d-flex align-items-center gap-1"><svg width="18" height="18"><use href="#word"/><text x="6" y="10.500" font-family="Liberation Serif" font-weight="bold" font-size="10" text-anchor="middle" fill="#1b2f88">W</text></svg>Документ2 (восстан...</div>
    <div class="task d-flex align-items-center gap-1"><svg width="18" height="18"><use href="#word"/><text x="6" y="10.500" font-family="Liberation Serif" font-weight="bold" font-size="10" text-anchor="middle" fill="#1b2f88">W</text></svg>Документ5 (восстан...</div>
    <div class="task on d-flex align-items-center gap-1"><svg width="16" height="16"><use href="#xl"/></svg>Microsoft Excel - Кни...</div>
    <div class="ru">RU</div>
    <div class="tray"><div class="chevr d-flex align-items-center justify-content-center"><svg width="8" height="10"><path d="M6 1L2 5l4 4" stroke="#fff" stroke-width="2" fill="none"/></svg></div><span>12:54</span></div>
  </div>

  <!-- dialog window -->
  <div class="dlg">
    <div class="dlgtitle d-flex align-items-center">
      <span>Мастер функций - шаг 1 из 2</span>
      <div class="ms-auto d-flex"><div class="dbtn">?</div><div class="dbtn x d-flex align-items-center justify-content-center"><svg width="13" height="13"><path d="M1.500 1.500l10 10M11.500 1.500l-10 10" stroke="#fff" stroke-width="2.400"/></svg></div></div>
    </div>
    <div class="dlgbody">
      <div class="lh13"><u>П</u>оиск функции:</div>
      <div class="d-flex mt-1" style="padding-top:2px">
        <div class="hint">Введите краткое описание действия, которое нужно<br>выполнить, и нажмите кнопку "Найти"</div>
        <button class="btn xpbtn" style="margin-left:10px;margin-top:1px"><u>Н</u>айти</button>
      </div>
      <div class="d-flex align-items-center" style="margin:2px 0 0 10px">
        <span style="width:61px"><u>К</u>атегория:</span>
        <div class="catsel d-flex align-items-center">Статистические<div class="dd ms-auto d-flex align-items-center justify-content-center"><svg width="10" height="8"><path d="M1 2l4 4 4-4" stroke="#4d6185" stroke-width="2" fill="none"/></svg></div></div>
      </div>
      <div class="lh13" style="margin-top:9px">Выберите <u>ф</u>ункцию:</div>
      <div class="fnlist d-flex" style="margin-top:6px">
        <div class="list-group flex-grow-1 rounded-0">
          <div class="list-group-item active">СРЗНАЧ</div>
          <div class="list-group-item">СРЗНАЧА</div>
          <div class="list-group-item">СРОТКЛ</div>
          <div class="list-group-item">СТАНДОТКЛОН</div>
          <div class="list-group-item">СТАНДОТКЛОНА</div>
          <div class="list-group-item">СТАНДОТКЛОНП</div>
          <div class="list-group-item">СТАНДОТКЛОНПА</div>
        </div>
        <div class="fnscroll d-flex flex-column">
          <div class="fnbtn d-flex align-items-center justify-content-center"><svg width="10" height="8"><path d="M1 6l4-4 4 4" stroke="#4d6185" stroke-width="2" fill="none"/></svg></div>
          <div class="fnthumb"></div>
          <div class="fnbtn d-flex align-items-center justify-content-center"><svg width="10" height="8"><path d="M1 2l4 4 4-4" stroke="#4d6185" stroke-width="2" fill="none"/></svg></div>
        </div>
      </div>
      <div class="fw-bold lh13" style="margin:5px 0 0 9px">СРЗНАЧ(число1;число2;...)</div>
      <div class="lh13 desc" style="margin:2px 0 0 9px">Возвращает среднее (арифметическое) своих аргументов, которые<br><span>могут быть числами или именами, массивами или ссылками на ячейки с</span><br>числами.</div>
      <div class="hr"></div>
      <div class="d-flex justify-content-between" style="margin:6px 3px 0 0">
        <a href="#" class="dlink">Справка по этой функции</a>
        <div class="d-flex"><button class="btn xpbtn def" style="margin-right:12px">ОК</button><button class="btn xpbtn">Отмена</button></div>
      </div>
    </div>
  </div>
</div>
<script src="https://cdn.jsdelivr.net/npm/bootstrap@5.3.0/dist/js/bootstrap.bundle.min.js"></script>
</body>
</html>
